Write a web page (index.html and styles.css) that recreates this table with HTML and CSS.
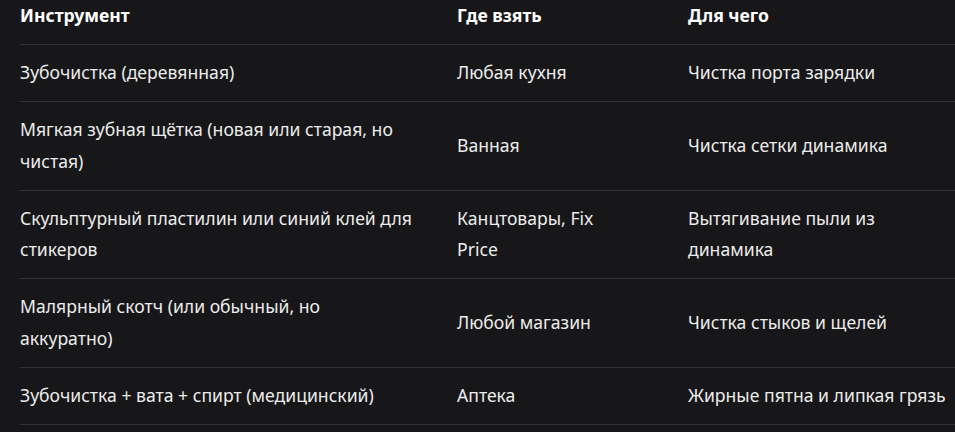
FILE: index.html
```html
<!DOCTYPE html>
<html lang="ru">
<head>
<meta charset="utf-8">
<link rel="stylesheet" href="styles.css">
</head>
<body>
<div class="wrap">
<table class="tools">
  <colgroup>
    <col class="c1">
    <col class="c2">
    <col class="c3">
  </colgroup>
  <thead>
    <tr><th>Инструмент</th><th>Где взять</th><th>Для чего</th></tr>
  </thead>
  <tbody>
    <tr><td>Зубочистка (деревянная)</td><td>Любая кухня</td><td>Чистка порта зарядки</td></tr>
    <tr><td>Мягкая зубная щётка (новая или старая, но чистая)</td><td>Ванная</td><td>Чистка сетки динамика</td></tr>
    <tr><td>Скульптурный пластилин или синий клей для стикеров</td><td>Канцтовары, Fix Price</td><td>Вытягивание пыли из динамика</td></tr>
    <tr><td>Малярный скотч (или обычный, но аккуратно)</td><td>Любой магазин</td><td>Чистка стыков и щелей</td></tr>
    <tr><td>Зубочистка + вата + спирт (медицинский)</td><td>Аптека</td><td>Жирные пятна и липкая грязь</td></tr>
  </tbody>
</table>
</div>
</body>
</html>
```

FILE: styles.css
```css
html, body {
  margin: 0;
  padding: 0;
  background: #171719;
  overflow: hidden;
}
.wrap {
  padding-left: 20px;
}
.tools {
  border-collapse: collapse;
  table-layout: fixed;
  width: 943px;
  font-family: "Noto Sans", "Open Sans", sans-serif;
  font-size: 17.6px;
  color: #ececec;
}
.c1 { width: 437px; }
.c2 { width: 231px; }
.c3 { width: 275px; }
.tools th,
.tools td {
  text-align: left;
  vertical-align: middle;
  padding: 12px 43px 13px 0;
  line-height: 31.3px;
  border-bottom: 1px solid #343436;
}
.tools td:nth-child(2),
.tools th:nth-child(2) { padding-right: 66px; }
.tools td:last-child,
.tools th:last-child { padding-right: 0; }
.tools th {
  padding-top: 0;
  padding-bottom: 12.7px;
  font-weight: 700;
  color: #ffffff;
}
```
